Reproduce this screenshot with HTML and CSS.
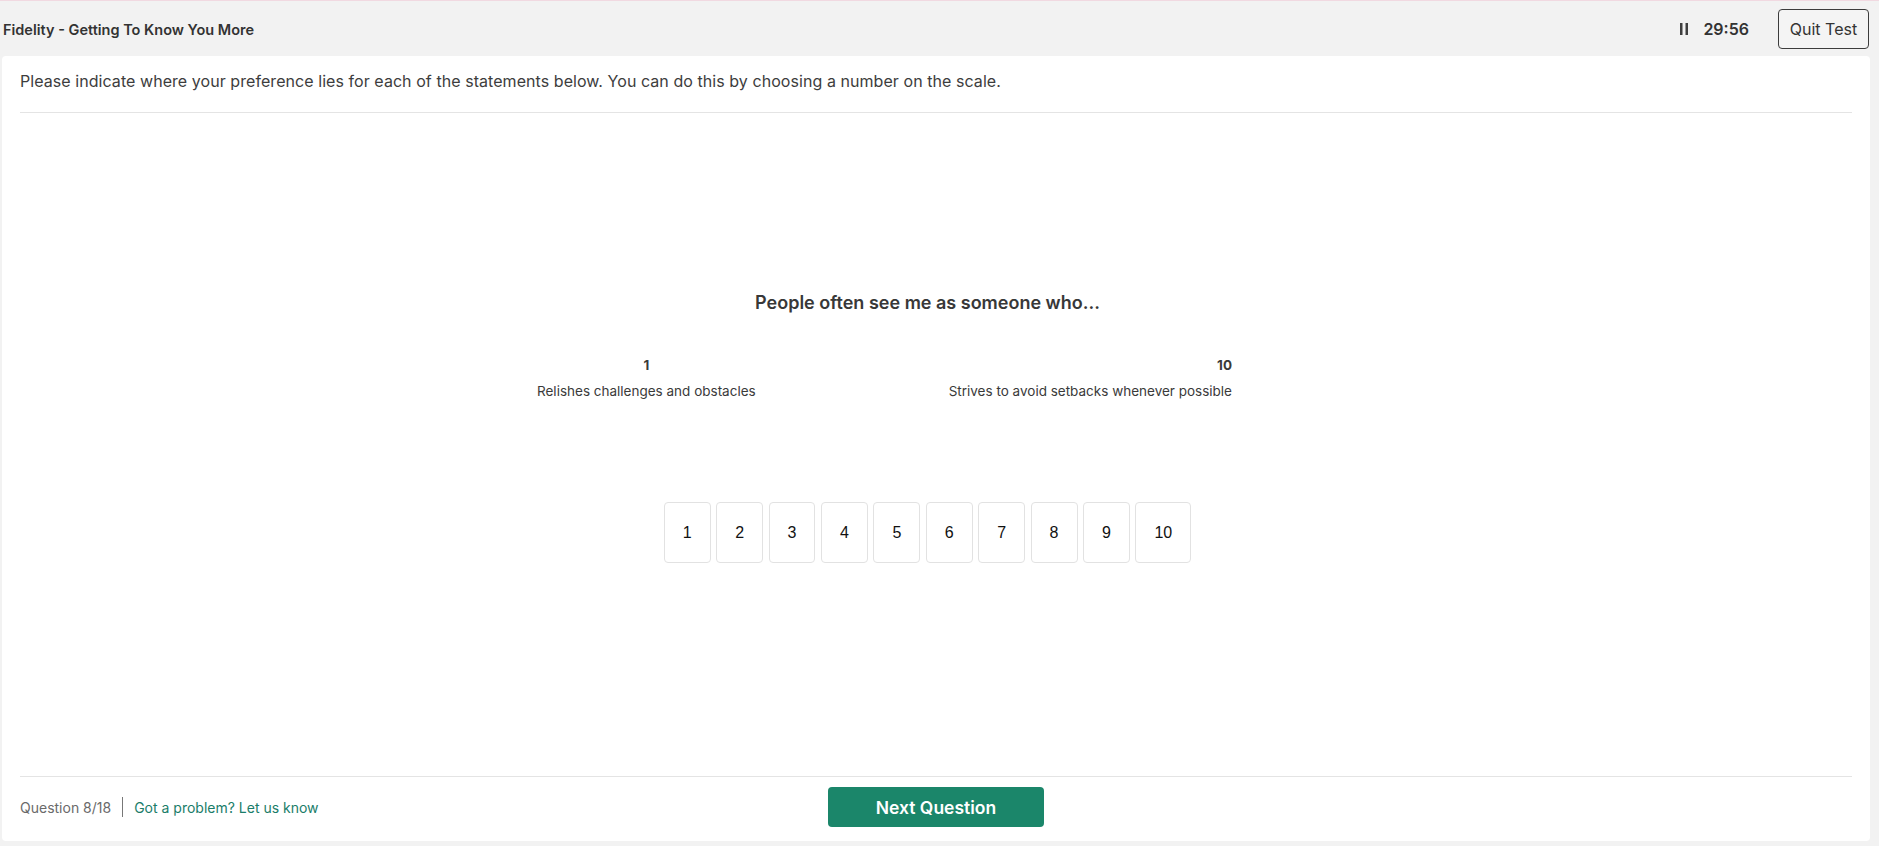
FILE: index.html
```html
<!DOCTYPE html>
<html lang="en">
<head>
<meta charset="utf-8">
<title>Fidelity - Getting To Know You More</title>
<link rel="stylesheet" href="styles.css">
</head>
<body>
<header class="topbar">
  <div class="test-name">Fidelity - Getting To Know You More</div>
  <div class="top-right">
    <svg class="pause" width="8" height="12" viewBox="0 0 8 12" aria-hidden="true"><rect x="0" y="0" width="2.5" height="12" fill="#3f3f3f"/><rect x="5.5" y="0" width="2.5" height="12" fill="#3f3f3f"/></svg>
    <span class="timer">29:56</span>
    <button class="quit">Quit Test</button>
  </div>
</header>
<main class="card">
  <div class="instructions">Please indicate where your preference lies for each of the statements below. You can do this by choosing a number on the scale.</div>
  <section class="question">
    <h2 class="q-title">People often see me as someone who...</h2>
    <div class="anchors">
      <div class="anchor anchor-left">
        <div class="anchor-num">1</div>
        <div class="anchor-text">Relishes challenges and obstacles</div>
      </div>
      <div class="anchor anchor-right">
        <div class="anchor-num">10</div>
        <div class="anchor-text">Strives to avoid setbacks whenever possible</div>
      </div>
    </div>
    <div class="scale">
      <button class="opt">1</button>
      <button class="opt">2</button>
      <button class="opt">3</button>
      <button class="opt">4</button>
      <button class="opt">5</button>
      <button class="opt">6</button>
      <button class="opt">7</button>
      <button class="opt">8</button>
      <button class="opt">9</button>
      <button class="opt">10</button>
    </div>
  </section>
  <footer class="footer">
    <div class="footer-left">
      <span class="progress">Question 8/18</span>
      <span class="sep"></span>
      <a class="problem" href="#">Got a problem? Let us know</a>
    </div>
    <button class="next">Next Question</button>
    <div class="footer-right"></div>
  </footer>
</main>
</body>
</html>
```
FILE: styles.css
```css
* { box-sizing: border-box; }
html, body { height: 100%; }
body {
  margin: 0;
  background: #f2f2f2;
  font-family: Inter, "Noto Sans", sans-serif;
  color: #3a3a3a;
  display: flex;
  flex-direction: column;
  height: 100vh;
}
.topbar {
  border-top: 1px solid #f1d9e1;
  height: 56px;
  flex: none;
  display: flex;
  align-items: center;
  justify-content: space-between;
  padding: 1px 10px 0 3px;
}
.test-name {
  font-size: 14.5px;
  font-weight: 600;
  color: #333;
}
.top-right {
  display: flex;
  align-items: center;
}
.pause { display: block; margin-right: 15px; }
.timer {
  font-size: 16px;
  font-weight: 600;
  color: #333;
  margin-right: 29px;
}
.quit {
  width: 91px;
  height: 40px;
  background: #f4f4f4;
  border: 1px solid #3c3c3c;
  border-radius: 4px;
  font-family: Inter, sans-serif;
  font-size: 16px;
  color: #333;
  padding: 0;
}
.card {
  flex: 1;
  margin: 0 9px 5px 2px;
  background: #fff;
  border-radius: 4px;
  padding: 0 18px;
  display: flex;
  flex-direction: column;
}
.instructions {
  font-size: 16px;
  letter-spacing: 0.06px;
  line-height: 24px;
  padding: 13px 0 19px;
  border-bottom: 1px solid #e4e4e4;
  color: #3d3d3d;
}
.question {
  flex: 1;
  padding: 178px 17px 0 0;
  display: flex;
  flex-direction: column;
}
.q-title {
  margin: 0;
  text-align: center;
  font-size: 18px;
  line-height: 24px;
  font-weight: 600;
  color: #383838;
}
.anchors {
  margin: 40px 0 0 517px;
  width: 695px;
  display: flex;
  justify-content: space-between;
  font-size: 13.5px;
  line-height: 20px;
  color: #3a3a3a;
}
.anchor-num { font-weight: 700; margin-bottom: 6px; }
.anchor-left { text-align: center; }
.anchor-right { text-align: right; }
.scale {
  margin-top: 101px;
  display: flex;
  justify-content: center;
  gap: 5.5px;
}
.opt {
  height: 61px;
  padding: 0 18px;
  background: #fff;
  border: 1px solid #e2e2e2;
  border-radius: 4px;
  font-family: "Liberation Sans", Arial, sans-serif;
  font-size: 16px;
  color: #111;
}
.footer {
  flex: none;
  border-top: 1px solid #e4e4e4;
  padding: 10px 0 14px;
  display: grid;
  grid-template-columns: 1fr auto 1fr;
  align-items: center;
}
.footer-left {
  display: flex;
  align-items: center;
  font-size: 14px;
}
.progress { color: #6a6a6a; }
.sep {
  width: 1px;
  height: 20px;
  background: #777;
  margin: 0 11px;
}
.problem {
  color: #1a7d69;
  text-decoration: none;
}
.next {
  width: 216px;
  height: 40px;
  background: #1b866a;
  color: #fff;
  border: none;
  border-radius: 4px;
  font-family: Inter, sans-serif;
  font-size: 17.5px;
  font-weight: 600;
}
```
